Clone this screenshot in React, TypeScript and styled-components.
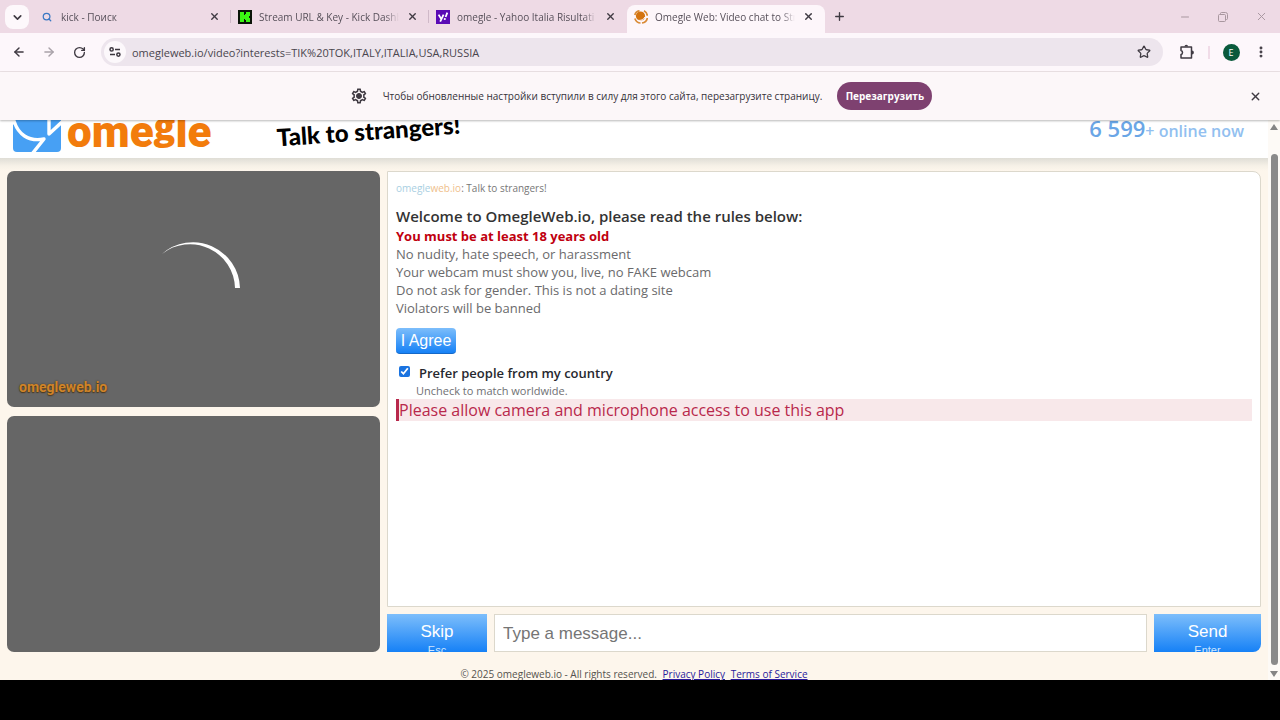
import React from "react";
import styled, { createGlobalStyle, css } from "styled-components";
import { ArrowLeft, ArrowRight, ChevronDown, EllipsisVertical, Minus, Plus, RotateCw, Search, Star, X } from "lucide-react";
import { MdOutlineSettings } from "react-icons/md";

const ui = '"Open Sans", "Noto Sans", sans-serif';
const arial = '"Liberation Sans", Arial, sans-serif';
const logo = 'Roboto, "Liberation Sans", sans-serif';

const GlobalStyle = createGlobalStyle`
  *, *::before, *::after { box-sizing: border-box; }
  body { margin: 0; background: #000; font-family: ${ui}; color: #45414a; }
  button { font: inherit; border: 0; padding: 0; background: none; color: inherit; }
  h1, p, ul { margin: 0; padding: 0; }
  ul { list-style: none; }
`;

const Desktop = styled.div`
  display: flex;
  flex-direction: column;
  min-height: 100vh;
  padding-bottom: 40px;
`;

const TabStrip = styled.header`
  display: flex;
  align-items: stretch;
  height: 33px;
  background: #eedae5;
`;

const IconButton = styled.button<{ $w?: number; $tone?: string }>`
  display: flex;
  align-items: center;
  justify-content: center;
  flex: none;
  width: ${(p) => p.$w ?? 30}px;
  color: ${(p) => p.$tone ?? "#3f3a42"};
`;

const TabSearch = styled(IconButton)`
  height: 24px;
  margin: 5px 4px 0 5px;
  border-radius: 8px;
  background: #fdf8fb;
`;

const Tabs = styled.nav`
  display: flex;
  flex: 0 1 792px;
  min-width: 0;
`;

const Tab = styled.div<{ $active?: boolean; $divided?: boolean }>`
  position: relative;
  display: flex;
  align-items: center;
  flex: 1 1 0;
  min-width: 0;
  gap: 7px;
  padding: 0 11px 0 7px;
  ${(p) =>
    p.$active &&
    css`
      margin-top: 5px;
      padding-bottom: 5px;
      background: #fdf6fa;
      border-radius: 8px 8px 0 0;
    `}
  ${(p) =>
    p.$divided &&
    css`
      &::after {
        content: "";
        position: absolute;
        right: 0;
        top: 10px;
        width: 1px;
        height: 13px;
        background: #cfb9c8;
      }
    `}
`;

const Favicon = styled.span`
  display: flex;
  justify-content: center;
  flex: none;
  width: 14px;
`;

const TabTitle = styled.a`
  flex: 1;
  min-width: 0;
  overflow: hidden;
  white-space: nowrap;
  font-size: 10px;
  line-height: 16px;
  color: #57505a;
  text-decoration: none;
  mask-image: linear-gradient(90deg, #000 90%, transparent);
`;

const WindowControls = styled.div`
  display: flex;
  margin-left: auto;
`;

const Toolbar = styled.div`
  display: flex;
  align-items: center;
  height: 39px;
  padding: 0 4px;
  background: #fdf7fb;
  border-bottom: 1px solid #ece3e6;
`;

const AddressBar = styled.div`
  display: flex;
  align-items: center;
  flex: 1;
  min-width: 0;
  height: 28px;
  margin: 0 9px 0 7px;
  padding: 0 4px 0 3px;
  border-radius: 14px;
  background: #ede5ed;
`;

const SiteInfo = styled(IconButton)`
  height: 22px;
  border-radius: 11px;
  background: #fcf8fb;
`;

const Address = styled.input`
  flex: 1;
  min-width: 0;
  margin-left: 6px;
  padding: 2px 0 0;
  border: 0;
  outline: 0;
  background: none;
  font: 11px/18px ${ui};
  color: #4a454d;
`;

const ToolbarDivider = styled.span`
  width: 2px;
  height: 13px;
  margin: 0 6px;
  background: #f1dce8;
`;

const Avatar = styled.span`
  width: 17px;
  height: 17px;
  border-radius: 50%;
  background: #0a5a3c;
  color: #fff;
  font-size: 9px;
  line-height: 17px;
  text-align: center;
`;

const InfoBar = styled.div`
  position: relative;
  z-index: 1;
  display: flex;
  align-items: center;
  height: 48px;
  padding: 0 10px 0 42px;
  background: #fcf7f9;
  box-shadow: 0 1px 2px rgba(0, 0, 0, 0.28);
`;

const InfoMessage = styled.div`
  display: flex;
  flex: 1;
  align-items: center;
  justify-content: center;
  gap: 15px;
  font-size: 10px;
  line-height: 16px;
  color: #36323a;
`;

const ReloadButton = styled.button`
  height: 28px;
  width: 95px;
  border-radius: 14px;
  background: #7e4170;
  color: #fff;
  font-size: 10px;
  font-weight: 700;
`;

const Viewport = styled.div`
  display: flex;
  flex: 1;
  background: #fdf6ec;
`;

const Site = styled.div`
  display: flex;
  flex-direction: column;
  flex: 1;
  min-width: 0;
`;

const Banner = styled.div`
  display: flex;
  align-items: flex-end;
  height: 38px;
  padding: 0 24px 0 13px;
  overflow: hidden;
  background: #fff;
`;

const BannerShadow = styled.div`
  height: 13px;
  background: linear-gradient(#dfddd6, #f6f1e7 60%, #fdf6ec);
`;

const Brand = styled.a`
  display: flex;
  align-items: flex-end;
  gap: 6px;
  padding-bottom: 6px;
  text-decoration: none;
  svg { display: block; }
`;

const Wordmark = styled.span`
  width: 145px;
  padding-bottom: 4px;
  font: 900 44px/32px ${logo};
  color: #f27c0c;
`;

const ShortG = styled.span`
  font: 800 36px/20px ${ui};
  vertical-align: 8px;
`;

const Slogan = styled.p`
  margin-left: 65px;
  padding-bottom: 12px;
  font: 900 24px/30px Lato, sans-serif;
  color: #000;
  white-space: nowrap;
  transform: rotate(-4deg);
`;

const Online = styled.p`
  margin-left: auto;
  padding-bottom: 12px;
  font-size: 16px;
  font-weight: 600;
  line-height: 30px;
  color: #92bff0;
  white-space: nowrap;
  strong { font-size: 22px; font-weight: 600; color: #6aa6e6; }
`;

const Room = styled.main`
  display: grid;
  grid-template-columns: 373fr 874fr;
  gap: 7px;
  flex: 1;
  padding: 0 7px;
`;

const Videos = styled.section`
  display: grid;
  grid-template-rows: 1fr 1fr;
  gap: 9px;
`;

const Video = styled.div`
  display: grid;
  place-items: center;
  position: relative;
  border-radius: 7px;
  background: #666;
`;

const Watermark = styled.span`
  position: absolute;
  left: 12px;
  bottom: 10px;
  font: 700 14px/20px ${logo};
  color: #d08428;
  text-shadow: 0 0 2px #4a3820, 0 1px 1px #4a3820;
`;

const Chat = styled.section`
  display: flex;
  flex-direction: column;
  gap: 7px;
  min-width: 0;
`;

const Log = styled.div`
  flex: 1;
  padding: 7px 8px;
  border: 1px solid #dcd8cc;
  border-radius: 0 8px 0 0;
  background: #fff;
`;

const Meta = styled.p`
  font-size: 10px;
  line-height: 18px;
  color: #777;
`;

const Tint = styled.span<{ $color: string }>`
  color: ${(p) => p.$color};
`;

const Welcome = styled.h1`
  margin: 9px 0 1px;
  font-size: 15px;
  font-weight: 600;
  line-height: 20px;
  color: #333;
`;

const Rule = styled.li<{ $strong?: boolean }>`
  font-size: 13px;
  line-height: 18px;
  color: ${(p) => (p.$strong ? "#c0000f" : "#6a6a6c")};
  font-weight: ${(p) => (p.$strong ? 700 : 400)};
`;

const blue = css`
  background: linear-gradient(#7dbefb, #1681f6);
  color: #fff;
  font-family: ${arial};
`;

const Agree = styled.button`
  ${blue}
  display: block;
  width: 60px;
  height: 26px;
  margin-top: 11px;
  border-radius: 4px;
  border-bottom: 1px solid #1468c8;
  font-size: 16px;
`;

const Preference = styled.label`
  display: flex;
  align-items: center;
  gap: 9px;
  margin-top: 9px;
  font-size: 13px;
  font-weight: 600;
  line-height: 20px;
  color: #26282e;
  input { width: 11px; height: 11px; margin: 0 0 3px 3px; accent-color: #1a73e0; }
`;

const Hint = styled.p`
  padding-left: 20px;
  font-size: 11px;
  line-height: 15px;
  color: #6f6f73;
`;

const Alert = styled.p`
  margin-top: 1px;
  border-left: 3px solid #b8284c;
  background: #f8e8ea;
  font-size: 16px;
  line-height: 22px;
  color: #b8284c;
`;

const Composer = styled.form`
  display: grid;
  grid-template-columns: 100px 1fr 107px;
  gap: 7px;
  height: 38px;
`;

const Action = styled.button<{ $last?: boolean }>`
  ${blue}
  display: flex;
  flex-direction: column;
  justify-content: flex-start;
  align-items: center;
  height: 38px;
  padding-top: 8px;
  overflow: hidden;
  border-radius: ${(p) => (p.$last ? "0 0 8px 0" : "0")};
  font-size: 17px;
  line-height: 20px;
  small { font-size: 11px; line-height: 16px; color: #cfe6fd; }
`;

const Message = styled.input`
  min-width: 0;
  padding: 1px 8px 0;
  border: 1px solid #dcd8cc;
  border-radius: 0;
  outline: 0;
  background: #fff;
  font: 17px ${arial};
  &::placeholder { color: #757575; }
`;

const Footer = styled.footer`
  height: 28px;
  padding-top: 14px;
  overflow: hidden;
  text-align: center;
  font-size: 10px;
  line-height: 16px;
  color: #55524e;
  a { margin-left: 3px; color: #2a1a9c; }
`;

const ScrollTrack = styled.div`
  display: flex;
  flex-direction: column;
  align-items: center;
  width: 12px;
  padding: 4px 0 3px;
  background: #fdfaf6;
`;

const Thumb = styled.div`
  flex: 1;
  width: 7px;
  margin: 24px 0 6px;
  border-radius: 4px;
  background: #8a8a8a;
`;

const Triangle = ({ down }: { down?: boolean }) => (
  <svg width="8" height="6" viewBox="0 0 8 6" fill="#858585">
    <path d={down ? "M0 0h8L4 6z" : "M0 6h8L4 0z"} />
  </svg>
);

const KickIcon = () => (
  <svg width="14" height="14" viewBox="0 0 14 14">
    <path fill="#0a1408" d="M0 0h14v14H0z" />
    <path fill="#3bf613" d="M2 2h4v3h1V4h1V2h4v4h-1v2h1v4H8v-2H7V9H6v3H2z" />
  </svg>
);

const YahooIcon = () => (
  <svg width="14" height="14" viewBox="0 0 14 14">
    <path fill="#5a0bb5" d="M0 0h14v14H0z" />
    <path fill="none" stroke="#fff" strokeWidth="1.8" d="M2.6 4.6l2.4 4M7.6 4.6l-3.4 7M11.3 2.600L9.600 7" />
    <circle cx="8.8" cy="9" r="1.1" fill="#fff" />
  </svg>
);

const OmegleIcon = () => (
  <svg width="14" height="14" viewBox="0 0 14 14">
    <circle cx="6.500" cy="6" r="4.600" fill="#d4730e" />
    <path fill="none" stroke="#d98a35" strokeWidth="1.700" d="M.8 8.500C2 11.500 4 13 6.500 13M8 13c3-.5 5-2.500 5.300-5M10 .8c2 1 3.200 3 3.300 5M.8 5C1.500 2.500 3 1 5.500.8" />
    <path fill="none" stroke="#fdf6fa" strokeWidth="1" d="M3 10c3 1 6 0 8-3" />
  </svg>
);

const RestoreIcon = () => (
  <svg width="10" height="10" viewBox="0 0 10 10" fill="none" stroke="currentColor">
    <rect x="0.500" y="2.500" width="7" height="7" rx="1" />
    <path d="M2.500 2.500V1.500a1 1 0 0 1 1-1h4a2 2 0 0 1 2 2v4a1 1 0 0 1-1 1h-1" />
  </svg>
);

const TuneIcon = () => (
  <svg width="12" height="10" viewBox="0 0 12 10" fill="none" stroke="#3b363e" strokeWidth="1.5">
    <circle cx="2.6" cy="2.4" r="1.6" />
    <path d="M6 2.4h5M1 7.6h5" />
    <circle cx="9.4" cy="7.6" r="1.6" />
  </svg>
);

const PuzzleIcon = () => (
  <svg width="16" height="16" viewBox="0 0 16 16">
    <path fill="none" stroke="#3f3a42" strokeWidth="1.5" strokeLinejoin="round" d="M2 3h10.500v11H2v-3.500c2-.3 2-3.700 0-4z" />
    <path fill="#3f3a42" d="M5.500 2.500a1.800 1.800 0 0 1 3.600 0zM13 6.600a1.900 1.900 0 0 1 0 3.800z" />
  </svg>
);

const GearIcon = () => (
  <svg width="18" height="18" viewBox="0 0 24 24" color="#3f3a42">
    <MdOutlineSettings size={24} />
    <circle cx="12" cy="12" r="3" fill="currentColor" />
  </svg>
);

const BrandMark = () => (
  <svg width="48" height="48" viewBox="0 0 48 48">
    <rect width="48" height="48" rx="4" fill="#47a0f4" />
    <path fill="#fff" d="M0 12h3c0 4-1 7-3 9z" />
    <path fill="none" stroke="#fff" strokeWidth="3.400" strokeLinejoin="round" d="M1 17C5 30 15 38 31 35L19 50M36 10V30L50 17" />
  </svg>
);

const Spinner = () => (
  <svg width="94" height="94" viewBox="0 0 94 94">
    <path fill="#fff" d="M93 46A47 47 0 0 0 15 12A45 45 0 0 1 88 46z" />
  </svg>
);

const tabs = [
  { title: "kick - Поиск", icon: <Search size={10} strokeWidth={3} color="#3a78c4" />, divided: true },
  { title: "Stream URL & Key - Kick Dashboard", icon: <KickIcon />, divided: true },
  { title: "omegle - Yahoo Italia Risultati ricerca", icon: <YahooIcon /> },
  { title: "Omegle Web: Video chat to Strangers", icon: <OmegleIcon />, active: true },
];

const rules = [
  "No nudity, hate speech, or harassment",
  "Your webcam must show you, live, no FAKE webcam",
  "Do not ask for gender. This is not a dating site",
  "Violators will be banned",
];

export default function App() {
  return (
    <Desktop>
      <GlobalStyle />
      <TabStrip>
        <TabSearch $w={24} aria-label="Search tabs"><ChevronDown size={13} strokeWidth={3} /></TabSearch>
        <Tabs>
          {tabs.map((t) => (
            <Tab key={t.title} $active={t.active} $divided={t.divided}>
              <Favicon>{t.icon}</Favicon>
              <TabTitle href="#">{t.title}</TabTitle>
              <IconButton $w={12} aria-label="Close tab"><X size={11} strokeWidth={3} /></IconButton>
            </Tab>
          ))}
        </Tabs>
        <IconButton $w={28} aria-label="New tab"><Plus size={13} strokeWidth={2.5} /></IconButton>
        <WindowControls>
          <IconButton $w={38} $tone="#a8979f" aria-label="Minimize"><Minus size={12} strokeWidth={2} /></IconButton>
          <IconButton $w={38} $tone="#a8979f" aria-label="Restore"><RestoreIcon /></IconButton>
          <IconButton $w={38} $tone="#a8979f" aria-label="Close window"><X size={13} strokeWidth={1.8} /></IconButton>
        </WindowControls>
      </TabStrip>
      <Toolbar>
        <IconButton aria-label="Back"><ArrowLeft size={14} strokeWidth={2.5} /></IconButton>
        <IconButton $tone="#a9a2a9" aria-label="Forward"><ArrowRight size={14} strokeWidth={2.5} /></IconButton>
        <IconButton aria-label="Reload"><RotateCw size={13} strokeWidth={2.5} /></IconButton>
        <AddressBar>
          <SiteInfo $w={22} aria-label="Site information"><TuneIcon /></SiteInfo>
          <Address aria-label="Address" defaultValue="omegleweb.io/video?interests=TIK%20TOK,ITALY,ITALIA,USA,RUSSIA" />
          <IconButton aria-label="Bookmark"><Star size={14} strokeWidth={2.2} /></IconButton>
        </AddressBar>
        <IconButton aria-label="Extensions"><PuzzleIcon /></IconButton>
        <ToolbarDivider />
        <IconButton aria-label="Profile"><Avatar>E</Avatar></IconButton>
        <IconButton aria-label="Menu"><EllipsisVertical size={14} strokeWidth={3} /></IconButton>
      </Toolbar>
      <InfoBar>
        <InfoMessage>
          <GearIcon />
          <span>Чтобы обновленные настройки вступили в силу для этого сайта, перезагрузите страницу.</span>
          <ReloadButton>Перезагрузить</ReloadButton>
        </InfoMessage>
        <IconButton aria-label="Dismiss"><X size={13} strokeWidth={2.5} /></IconButton>
      </InfoBar>
      <Viewport>
        <Site>
          <Banner>
            <Brand href="#">
              <BrandMark />
              <Wordmark>ome<ShortG>g</ShortG>le</Wordmark>
            </Brand>
            <Slogan>Talk to strangers!</Slogan>
            <Online><strong>6 599</strong>+ online now</Online>
          </Banner>
          <BannerShadow />
          <Room>
            <Videos>
              <Video>
                <Spinner />
                <Watermark>omegleweb.io</Watermark>
              </Video>
              <Video />
            </Videos>
            <Chat>
              <Log>
                <Meta>
                  <Tint $color="#a9cfe2">omegle</Tint><Tint $color="#efc08c">web.io</Tint>: Talk to strangers!
                </Meta>
                <Welcome>Welcome to OmegleWeb.io, please read the rules below:</Welcome>
                <ul>
                  <Rule $strong>You must be at least 18 years old</Rule>
                  {rules.map((r) => <Rule key={r}>{r}</Rule>)}
                </ul>
                <Agree type="button">I Agree</Agree>
                <Preference><input type="checkbox" defaultChecked />Prefer people from my country</Preference>
                <Hint>Uncheck to match worldwide.</Hint>
                <Alert role="alert">Please allow camera and microphone access to use this app</Alert>
              </Log>
              <Composer>
                <Action type="button">Skip<small>Esc</small></Action>
                <Message aria-label="Message" placeholder="Type a message..." />
                <Action type="button" $last>Send<small>Enter</small></Action>
              </Composer>
            </Chat>
          </Room>
          <Footer>
            © 2025 omegleweb.io - All rights reserved. <a href="#">Privacy Policy</a> <a href="#">Terms of Service</a>
          </Footer>
        </Site>
        <ScrollTrack>
          <Triangle />
          <Thumb />
          <Triangle down />
        </ScrollTrack>
      </Viewport>
    </Desktop>
  );
}
